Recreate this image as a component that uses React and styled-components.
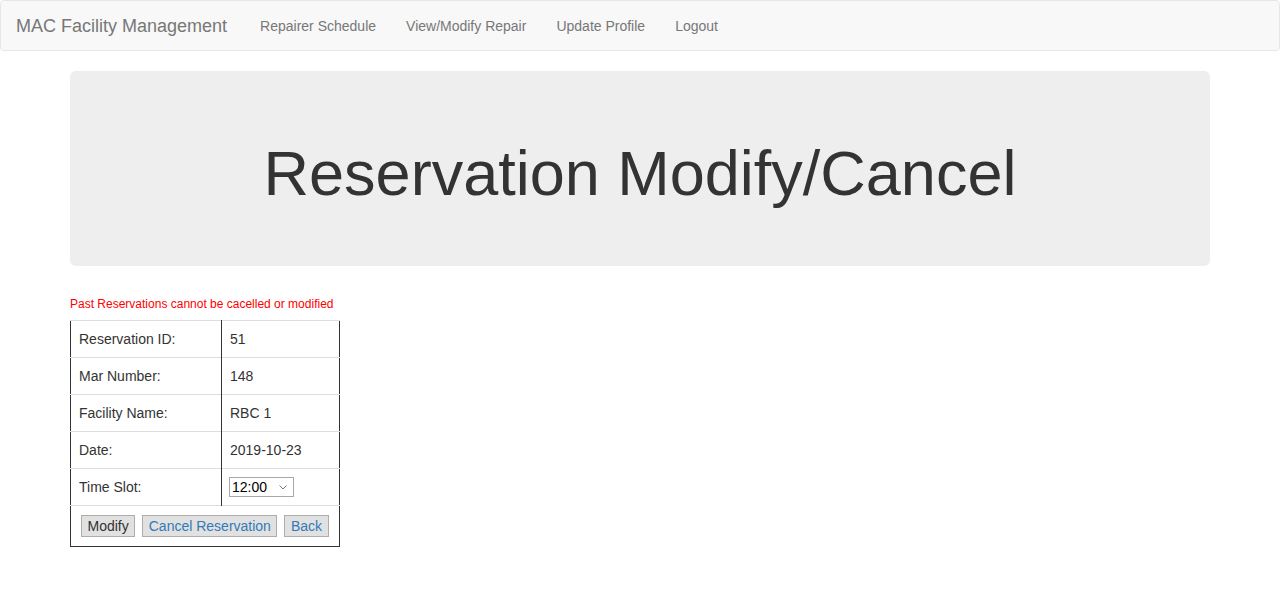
import React from "react";
import styled, { createGlobalStyle } from "styled-components";

const Global = createGlobalStyle`
  html, body { margin: 0; padding: 0; background: #fff; }
  body {
    font-family: "Liberation Sans", Arial, sans-serif;
    font-size: 14px;
    line-height: 1.42857143;
    color: #333;
  }
  * { box-sizing: border-box; }
`;

const Navbar = styled.nav`
  display: flex;
  align-items: center;
  height: 51px;
  background: #f8f8f8;
  border: 1px solid #e7e7e7;
  border-radius: 4px;
  margin-bottom: 20px;
`;

const Brand = styled.a`
  padding: 15px 18px 15px 15px;
  font-size: 18px;
  line-height: 20px;
  color: #777;
  text-decoration: none;
`;

const NavList = styled.ul`
  display: flex;
  list-style: none;
  margin: 0;
  padding: 0;
`;

const NavLink = styled.a`
  display: block;
  padding: 15px;
  line-height: 20px;
  color: #777;
  text-decoration: none;
`;

const Container = styled.div`
  width: 1170px;
  margin: 0 auto;
  padding: 0 15px;
`;

const Jumbotron = styled.div`
  background: #eee;
  border-radius: 6px;
  padding: 48px 60px;
  margin-bottom: 30px;
  text-align: center;
`;

const Title = styled.h1`
  font-size: 63px;
  font-weight: 500;
  line-height: 1.1;
  margin: 20px 0 10px;
  color: #333;
`;

const Warning = styled.div`
  color: #ff0000;
  font-size: 12px;
  line-height: 17px;
  margin-bottom: 7px;
`;

const Table = styled.table`
  width: 269px;
  table-layout: fixed;
  border-collapse: collapse;
  border-spacing: 0;
  border-top: 1px solid #ddd;
  border-left: 1px solid #333;
  border-right: 1px solid #333;
  border-bottom: 1px solid #333;
`;

const Cell = styled.td`
  padding: 8px;
  height: 37px;
  line-height: 20px;
  border-top: 1px solid #ddd;
  vertical-align: middle;
  border-right: ${(p) => (p.$divider ? "1px solid #333" : "none")};
`;

const ActionCell = styled.td`
  padding: 9px 10px 9px 10px;
  border-top: 1px solid #ddd;
`;

const Actions = styled.div`
  display: flex;
  gap: 7px;
  white-space: nowrap;
`;

const Button = styled.button`
  font-family: "Liberation Sans", Arial, sans-serif;
  font-size: 14px;
  line-height: 16px;
  height: 22px;
  padding: 1px 5.5px;
  background: #e1e1e1;
  border: 1px solid #adadad;
  border-radius: 0;
  white-space: nowrap;
  flex-shrink: 0;
  color: ${(p) => (p.$link ? "#337ab7" : "#333")};
  cursor: pointer;
`;

const Select = styled.div`
  display: flex;
  align-items: center;
  justify-content: space-between;
  width: 65px;
  height: 20px;
  line-height: 18px;
  padding: 0 6px 0 2px;
  border: 1px solid #a9a9a9;
  background: #fff;
  font-size: 14px;
  color: #000;
  margin-left: -1px;
`;

const rows = [
  ["Reservation ID:", "51"],
  ["Mar Number:", "148"],
  ["Facility Name:", "RBC 1"],
  ["Date:", "2019-10-23"],
];

export default function App() {
  return (
    <>
      <Global />
      <Navbar>
        <Brand href="#">MAC Facility Management</Brand>
        <NavList>
          <li><NavLink href="#">Repairer Schedule</NavLink></li>
          <li><NavLink href="#">View/Modify Repair</NavLink></li>
          <li><NavLink href="#">Update Profile</NavLink></li>
          <li><NavLink href="#">Logout</NavLink></li>
        </NavList>
      </Navbar>
      <Container>
        <Jumbotron>
          <Title>Reservation Modify/Cancel</Title>
        </Jumbotron>
        <Warning>Past Reservations cannot be cacelled or modified</Warning>
        <Table>
          <colgroup>
            <col style={{ width: 151 }} />
            <col style={{ width: 118 }} />
          </colgroup>
          <tbody>
            {rows.map(([k, v]) => (
              <tr key={k}>
                <Cell $divider>{k}</Cell>
                <Cell>{v}</Cell>
              </tr>
            ))}
            <tr>
              <Cell $divider>Time Slot:</Cell>
              <Cell>
                <Select>
                  <span>12:00</span>
                  <svg width="8" height="5" viewBox="0 0 8 5">
                    <path d="M0.5 0.5 L4 4 L7.5 0.5" fill="none" stroke="#777" strokeWidth="1" />
                  </svg>
                </Select>
              </Cell>
            </tr>
            <tr>
              <ActionCell colSpan={2}>
                <Actions>
                  <Button>Modify</Button>
                  <Button $link>Cancel Reservation</Button>
                  <Button $link>Back</Button>
                </Actions>
              </ActionCell>
            </tr>
          </tbody>
        </Table>
      </Container>
    </>
  );
}
